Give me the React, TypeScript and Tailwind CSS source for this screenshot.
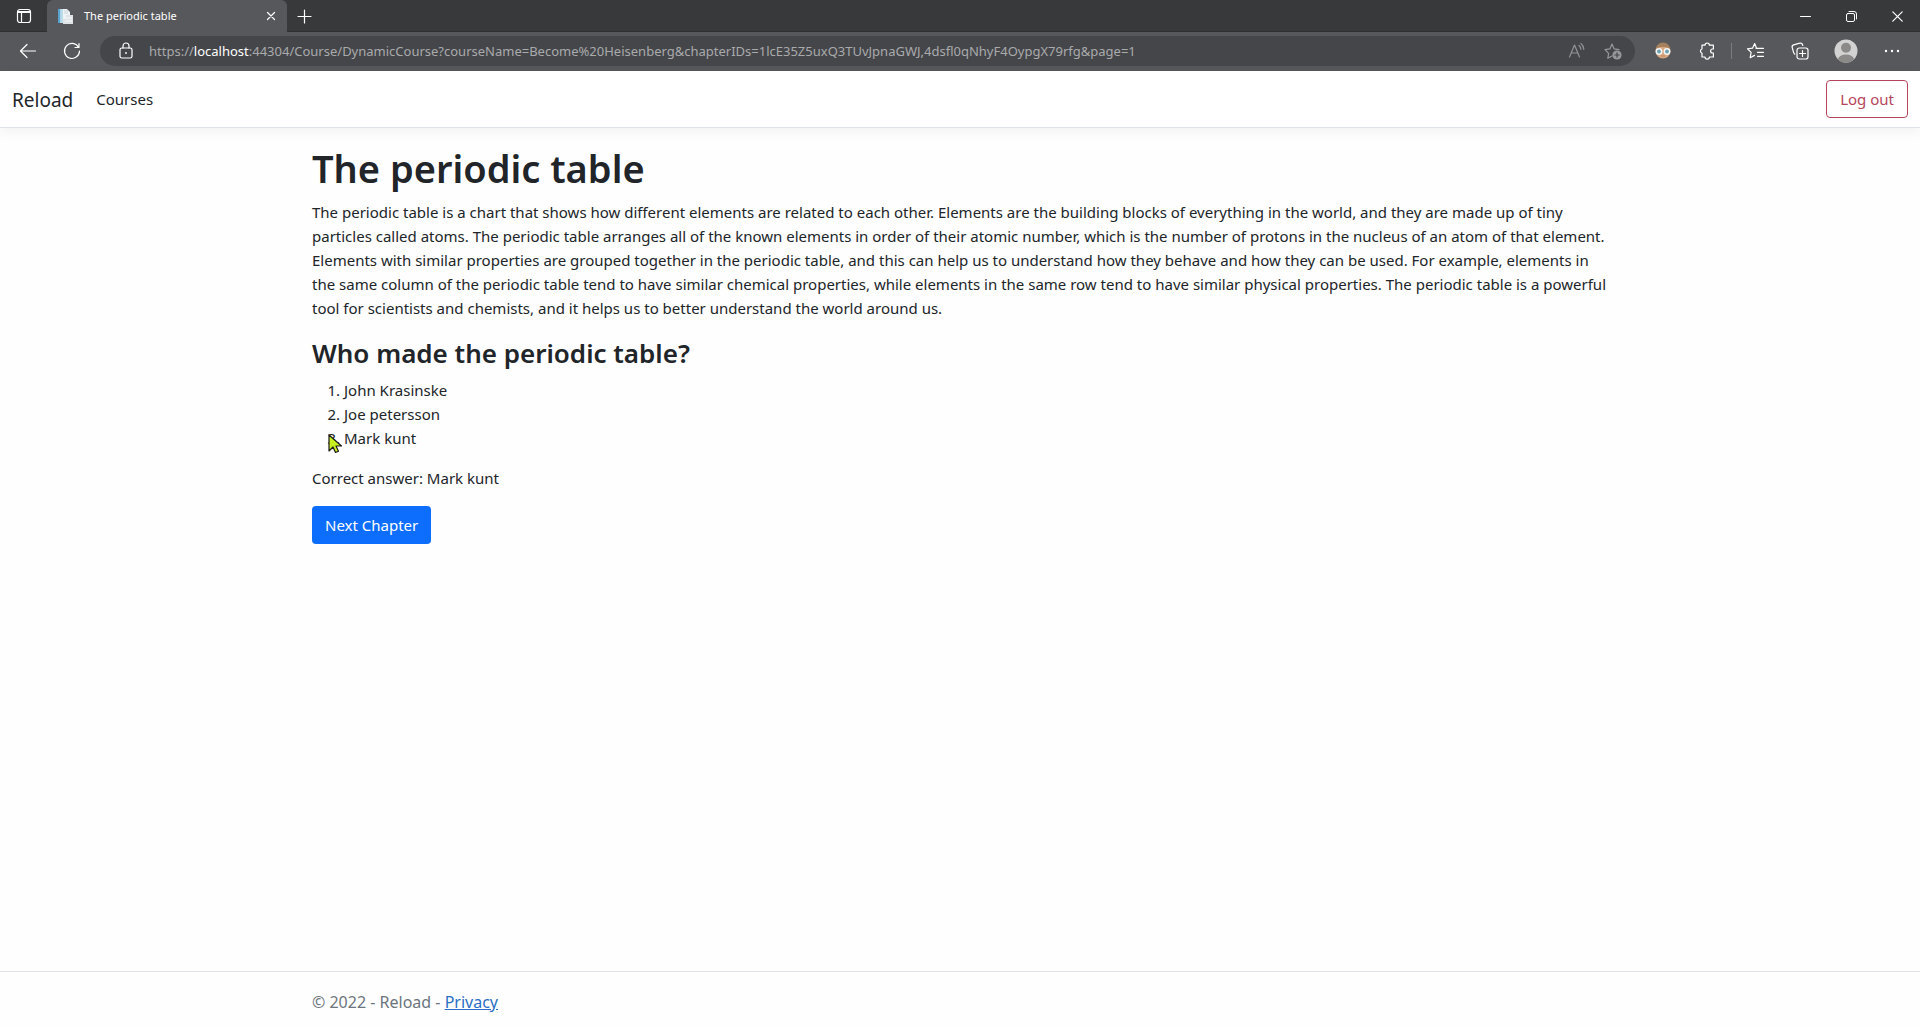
import React from "react";

type IconProps = { children: React.ReactNode; size?: number; className?: string };

function Icon({ children, size = 20, className = "" }: IconProps) {
  return (
    <svg
      width={size}
      height={size}
      viewBox={`0 0 ${size} ${size}`}
      fill="none"
      stroke="currentColor"
      strokeWidth="1.2"
      strokeLinecap="round"
      strokeLinejoin="round"
      aria-hidden="true"
      className={`shrink-0 ${className}`}
    >
      {children}
    </svg>
  );
}

function IconButton({ label, className = "w-11", children }: { label: string; className?: string; children: React.ReactNode }) {
  return (
    <button type="button" aria-label={label} className={`flex h-full shrink-0 items-center justify-center ${className}`}>
      {children}
    </button>
  );
}

function TabStrip() {
  return (
    <div className="flex h-8 bg-[#38393b] text-white shadow-[inset_0_-1px_0_#2f3032]">
      <IconButton label="Tab actions" className="w-[47px]">
        <Icon>
          <rect x="3.5" y="3.5" width="13" height="13" rx="2.5" />
          <path d="M4 5.7h12M4 6.5h12M7.5 7v9" />
        </Icon>
      </IconButton>
      <div className="flex w-60 items-center rounded-t-md bg-[#57585b] pl-2.5">
        <svg width="17" height="17" viewBox="0 0 17 17" aria-hidden="true" className="mr-2.5 shrink-0">
          <path d="M1 1h9l3 3v11H1z" fill="#eef3f5" />
          <path d="M1 1h2.5v14H1z" fill="#5ba3cf" />
          <path d="M3.5 1H6v14H3.500z" fill="#b9dcea" />
          <path d="M7 3h4M7 5h4" stroke="#c9d3d8" />
          <path d="M9 7h7v9H6v-5h3z" fill="#dfe3e6" />
          <path d="M9 10h6M8 13h7" stroke="#f8fafa" />
        </svg>
        <span className="grow whitespace-nowrap text-[11px] leading-4">The periodic table</span>
        <IconButton label="Close tab" className="w-8">
          <Icon size={10}>
            <path d="M1.500 1.500l7 7M8.500 1.500l-7 7" />
          </Icon>
        </IconButton>
      </div>
      <IconButton label="New tab" className="w-[35px]">
        <Icon size={15}>
          <path d="M7.500 1v13M1 7.500h13" />
        </Icon>
      </IconButton>
      <div className="grow" />
      <IconButton label="Minimize" className="w-[46px]">
        <Icon size={11}>
          <path d="M.5 5.500h10" strokeWidth="1" />
        </Icon>
      </IconButton>
      <IconButton label="Restore" className="w-[46px]">
        <Icon size={11}>
          <rect x=".5" y="2.500" width="8" height="8" rx="1.500" strokeWidth="1" />
          <path d="M3 .5h5a2.500 2.500 0 0 1 2.500 2.500v5" strokeWidth="1" />
        </Icon>
      </IconButton>
      <IconButton label="Close window" className="w-[46px]">
        <Icon size={11}>
          <path d="M.8.8l9.400 9.400M10.200.8L.8 10.200" />
        </Icon>
      </IconButton>
    </div>
  );
}

function Toolbar() {
  return (
    <div className="flex h-[39px] items-center bg-[#57585b] px-1.5 pb-px text-white">
      <IconButton label="Back">
        <Icon>
          <path d="M17.500 10H2.500M9 3.500L2.500 10 9 16.500" />
        </Icon>
      </IconButton>
      <IconButton label="Refresh">
        <Icon>
          <path d="M16.500 6.200A7.500 7.500 0 1 0 17.500 10M17 2.500v4h-4" />
        </Icon>
      </IconButton>
      <div className="ml-1.5 flex h-[30px] grow items-center rounded-full bg-[#45464a] pl-2 pr-1">
        <IconButton label="Site information" className="w-9">
          <Icon>
            <rect x="4" y="7" width="12" height="10" rx="1.800" />
            <path d="M7 7V5a3 3 0 0 1 6 0v2" />
            <circle cx="10" cy="12" r="0.900" fill="currentColor" stroke="none" />
          </Icon>
        </IconButton>
        <div
          role="textbox"
          aria-label="Address"
          tabIndex={0}
          className="ml-[5px] grow whitespace-nowrap text-[13px] leading-5 text-[#a9aaac]"
        >
          https://<span className="text-white">localhost</span>
          :44304/Course/DynamicCourse?courseName=Become%20Heisenberg&amp;chapterIDs=1lcE35Z5uxQ3TUvJpnaGWJ,4dsfl0qNhyF4OypgX79rfg&amp;page=1
        </div>
        <IconButton label="Read aloud" className="w-9">
          <Icon className="text-[#929395]">
            <path d="M2.500 16L7.500 4l5 12M4.200 12h6.600M12 4.500c1.200 1 1.800 2.200 1.900 3.800M14 2.500c1.800 1.500 2.700 3.300 2.800 5.800" />
          </Icon>
        </IconButton>
        <IconButton label="Add to favorites" className="w-9">
          <Icon className="text-[#97989a]">
            <path d="M9 15l-4.200 2.300.8-5L2 8.700l4.900-.8L9 3l2.200 4.900 4.800.8" />
            <circle cx="14" cy="14" r="4.600" fill="currentColor" stroke="none" />
            <path d="M14 11.800v4.400M11.800 14h4.400" stroke="#45464a" />
          </Icon>
        </IconButton>
      </div>
      <IconButton label="Profile extension" className="ml-1.5 w-11">
        <svg width="18" height="18" viewBox="0 0 18 18" aria-hidden="true">
          <circle cx="9" cy="9" r="7.500" fill="#d9a67e" />
          <path d="M1.500 8a7.500 7.500 0 0 1 15 0c-2-2.500-4-3-7.500-3S3 5.500 1.500 8z" fill="#a5805f" />
          <circle cx="5" cy="9.500" r="2.700" fill="#6f9fae" stroke="#f1f6f7" strokeWidth="1.500" />
          <circle cx="13" cy="9.500" r="2.700" fill="#6f9fae" stroke="#f1f6f7" strokeWidth="1.500" />
          <path d="M7 14h4" stroke="#b98560" />
        </svg>
      </IconButton>
      <IconButton label="Extensions">
        <Icon>
          <path d="M5 4.200h3a2.200 2.200 0 0 1 4.400 0h4v3.800h-.8a2 2 0 0 0 0 4h.8v4h-4a2.200 2.200 0 0 1-4.400 0H5v-3.800a2.200 2.200 0 0 1 0-4.200z" />
        </Icon>
      </IconButton>
      <div className="mx-0.5 h-4 w-px bg-[#7c7d80]" />
      <IconButton label="Favorites">
        <Icon>
          <path d="M10.500 7.300L8.700 2.500 6.500 7.200l-5 .7 3.600 3.500-.9 5.300 4.300-2.300M10 7.300h7.500M11.500 11.300h6M11.500 15.300h6" />
        </Icon>
      </IconButton>
      <IconButton label="Collections">
        <Icon>
          <rect x="7" y="7" width="11" height="11" rx="2.200" />
          <path d="M12.500 9.500v6M9.500 12.500h6M4.800 13.200a4 4 0 0 1-1.300-2L2.200 6.500a2.200 2.200 0 0 1 1.500-2.700l6-1.600A2.200 2.200 0 0 1 12.500 3.500l.3 1" />
        </Icon>
      </IconButton>
      <IconButton label="Profile" className="w-12">
        <svg width="24" height="24" viewBox="0 0 24 24" aria-hidden="true">
          <defs>
            <clipPath id="avatar-clip">
              <circle cx="12" cy="12" r="11.500" />
            </clipPath>
          </defs>
          <g clipPath="url(#avatar-clip)">
            <rect width="24" height="24" fill="#d2d2d2" />
            <circle cx="12" cy="8.700" r="5" fill="#8b8a88" />
            <ellipse cx="12" cy="20.500" rx="8" ry="5" fill="#8b8a88" />
          </g>
        </svg>
      </IconButton>
      <IconButton label="Settings and more">
        <Icon>
          <g fill="currentColor" stroke="none">
            <circle cx="4" cy="10" r="1.200" />
            <circle cx="10" cy="10" r="1.200" />
            <circle cx="16" cy="10" r="1.200" />
          </g>
        </Icon>
      </IconButton>
    </div>
  );
}

const answers = ["John Krasinske", "Joe petersson", "Mark kunt"];

export default function App() {
  return (
    <div className="flex min-h-screen flex-col bg-[#fefefe] font-['Noto_Sans','Open_Sans',sans-serif] text-[15px] leading-6 text-[#212529]">
      <TabStrip />
      <Toolbar />
      <header className="mb-4 flex h-[57px] shrink-0 items-center border-b border-[#dee2e6] bg-white px-3 shadow-[0_4px_12px_rgba(0,0,0,0.05)]">
        <a href="#home" className="pt-0.5 text-[19px] leading-8">Reload</a>
        <nav className="ml-[23px] grow">
          <a href="#courses">Courses</a>
        </nav>
        <button type="button" className="h-[38px] rounded border border-[#b5455a] px-[13px] text-[#b5455a]">
          Log out
        </button>
      </header>
      <main className="mx-auto w-full max-w-[1320px] grow px-3">
        <h1 className="mb-2 text-[38px] font-semibold leading-[48px]">The periodic table</h1>
        <p className="mb-4">
          The periodic table is a chart that shows how different elements are related to each other. Elements are the building blocks of everything in the world, and they are made up of tiny<br />
          particles called atoms. The periodic table arranges all of the known elements in order of their atomic number, which is the number of protons in the nucleus of an atom of that element.<br />
          Elements with similar properties are grouped together in the periodic table, and this can help us to understand how they behave and how they can be used. For example, elements in<br />
          the same column of the periodic table tend to have similar chemical properties, while elements in the same row tend to have similar physical properties. The periodic table is a powerful<br />
          tool for scientists and chemists, and it helps us to better understand the world around us.
        </p>
        <h2 className="mb-2 text-[26px] font-semibold leading-[34px]">Who made the periodic table?</h2>
        <div className="relative mb-4">
          <ol className="list-decimal pl-8">
            {answers.map((answer) => (
              <li key={answer}>{answer}</li>
            ))}
          </ol>
          <svg width="15" height="21" viewBox="0 0 15 21" aria-hidden="true" className="absolute left-4 top-14">
            <path d="M1 1v16l4-4 2.500 5.500 3-1.300L8 12h5.500z" fill="#c8f020" stroke="#1a1a1a" strokeWidth="1.200" strokeLinejoin="round" />
          </svg>
        </div>
        <p className="mb-4">Correct answer: Mark kunt</p>
        <button type="button" className="h-[38px] rounded bg-[#0d6efd] px-[13px] text-white">
          Next Chapter
        </button>
      </main>
      <footer className="border-t border-[#dee2e6] text-base text-[#6c757d]">
        <div className="mx-auto flex h-[55px] max-w-[1320px] items-center px-3 pt-1">
          <p>
            © 2022 - Reload - <a href="#privacy" className="text-[#2a6fc4] underline">Privacy</a>
          </p>
        </div>
      </footer>
    </div>
  );
}
